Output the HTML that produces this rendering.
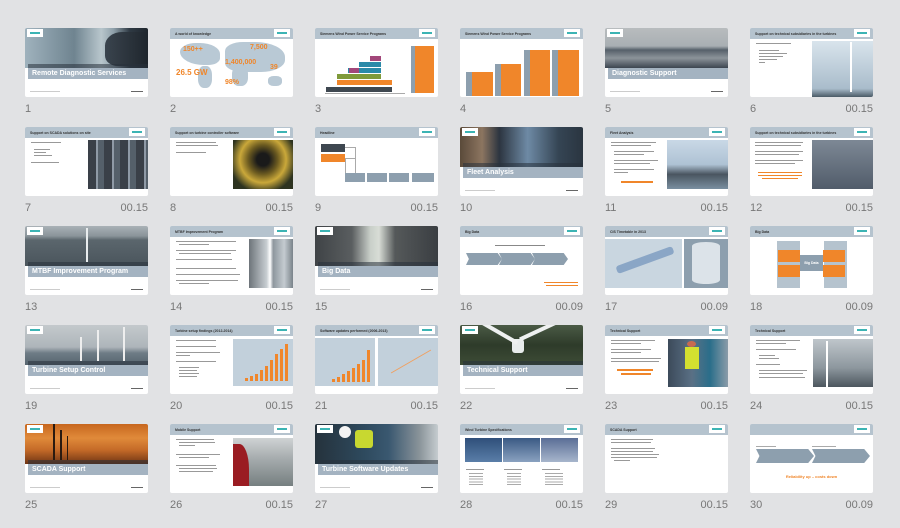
<!DOCTYPE html>
<html><head><meta charset="utf-8">
<style>
body{margin:0;width:900px;height:528px;background:#e1e2e4;font-family:"Liberation Sans",sans-serif;position:relative;overflow:hidden}
.s{position:absolute;width:123px;height:69px;background:#fff;border-radius:2px;overflow:hidden}
.s *{position:absolute;box-sizing:border-box}
.h{left:0;top:0;width:123px;height:12px;background:#b5c3ce;border-bottom:1px solid #fff}
.h b{left:5px;top:4px;font-size:3.5px;color:#333;white-space:nowrap}
.lg{right:3px;top:1px;width:16px;height:8px;background:#fff}
.lg:after{content:"";position:absolute;left:3px;top:3px;width:10px;height:1.5px;background:#3cb4b4}
.tl{left:2px;top:1px}
.ph{left:0;top:0;width:123px;height:40px}
.st{left:3px;top:36px;width:120px;height:4px;background:rgba(40,50,60,.55)}
.bd{left:3px;top:40px;width:120px;height:11px;background:#a4b3c1;color:#fff;font-weight:bold;font-size:7px;line-height:11px;padding-left:4px;white-space:nowrap}
.f1{left:5px;top:63px;width:30px;height:1px;background:#ccc}
.f2{right:5px;top:63px;width:12px;height:1px;background:#666}
.ln{height:1.2px;background:#999}
.o{background:#f0862a}
.g{background:#8d9fae}
.lab{position:absolute;font-size:11px;color:#777;width:123px}
.lab span{float:right}
</style></head><body>

<!-- Row 1 -->
<div class="s" style="left:25px;top:28px">
<div class="ph" style="background:linear-gradient(90deg,#9fb2bd 0%,#6f8490 40%,#b8c6cc 62%,#8fa0aa 72%,#2f3a44 85%,#1f262d 100%)"></div>
<div style="left:80px;top:4px;width:43px;height:34px;border-radius:40% 0 0 30%;background:linear-gradient(90deg,#3a444e,#1f262d)"></div>
<div class="st"></div><div class="bd">Remote Diagnostic Services</div>
<div class="lg tl"></div><div class="f1"></div><div class="f2"></div></div>

<div class="s" style="left:170px;top:28px">
<div class="h"><b>A world of knowledge</b></div><div class="lg"></div>
<div style="left:10px;top:15px;width:40px;height:22px;background:#b9c9d5;border-radius:40% 50% 30% 60%"></div>
<div style="left:28px;top:38px;width:14px;height:22px;background:#b9c9d5;border-radius:40%"></div>
<div style="left:55px;top:14px;width:60px;height:30px;background:#b9c9d5;border-radius:30% 50% 40% 30%"></div>
<div style="left:62px;top:38px;width:16px;height:20px;background:#b9c9d5;border-radius:40%"></div>
<div style="left:98px;top:48px;width:14px;height:10px;background:#b9c9d5;border-radius:40%"></div>
<div style="left:13px;top:18px;font-size:7px;color:#f0862a;font-weight:bold">150++</div>
<div style="left:80px;top:16px;font-size:7px;color:#f0862a;font-weight:bold">7,500</div>
<div style="left:55px;top:31px;font-size:7px;color:#f0862a;font-weight:bold">1,400,000</div>
<div style="left:100px;top:36px;font-size:7px;color:#f0862a;font-weight:bold">39</div>
<div style="left:6px;top:40px;font-size:8px;color:#f0862a;font-weight:bold">26.5 GW</div>
<div style="left:55px;top:51px;font-size:7px;color:#f0862a;font-weight:bold">98%</div></div>

<div class="s" style="left:315px;top:28px">
<div class="h"><b>Siemens Wind Power Service Programs</b></div><div class="lg"></div>
<div style="left:10px;top:65px;width:80px;height:1px;background:#aaa"></div>
<div style="left:11px;top:59px;width:66px;height:5px;background:#3e4750"></div>
<div style="left:22px;top:52px;width:55px;height:5px" class="o"></div>
<div style="left:22px;top:46px;width:44px;height:5px;background:#7f9a3a"></div>
<div style="left:33px;top:40px;width:33px;height:5px;background:#2a8aa8"></div>
<div style="left:44px;top:34px;width:22px;height:5px;background:#2a8aa8"></div>
<div style="left:55px;top:28px;width:11px;height:5px;background:#a2477a"></div>
<div style="left:34px;top:40px;width:10px;height:5px;background:#a2477a"></div>
<div style="left:96px;top:18px;width:4px;height:47px;background:#8d9fae"></div>
<div style="left:100px;top:18px;width:19px;height:47px" class="o"></div></div>

<div class="s" style="left:460px;top:28px">
<div class="h"><b>Siemens Wind Power Service Programs</b></div><div class="lg"></div>
<div style="left:6px;top:44px;width:6px;height:24px" class="g"></div><div style="left:12px;top:44px;width:21px;height:24px" class="o"></div>
<div style="left:35px;top:36px;width:6px;height:32px" class="g"></div><div style="left:41px;top:36px;width:20px;height:32px" class="o"></div>
<div style="left:64px;top:22px;width:6px;height:46px" class="g"></div><div style="left:70px;top:22px;width:20px;height:46px" class="o"></div>
<div style="left:92px;top:22px;width:6px;height:46px" class="g"></div><div style="left:98px;top:22px;width:21px;height:46px" class="o"></div></div>

<div class="s" style="left:605px;top:28px">
<div class="ph" style="background:linear-gradient(180deg,#b8bcbe 0%,#a9afb3 45%,#56606a 55%,#8c949a 75%,#3c4550 100%)"></div>
<div class="bd" style="top:40px;left:3px">Diagnostic Support</div>
<div class="lg tl"></div><div class="f1"></div><div class="f2"></div></div>

<div class="s" style="left:750px;top:28px">
<div class="h"><b>Support on technical subsidiaries in the turbines</b></div><div class="lg"></div>
<div style="left:62px;top:13px;width:61px;height:56px;background:linear-gradient(180deg,#d9e4ec,#a9bccb 85%,#4a5a66)"></div>
<div style="left:100px;top:14px;width:2px;height:50px;background:#fff"></div>
<div style="left:6px;top:15px;width:35px" class="ln"></div>
<div style="left:9px;top:22px;width:20px" class="ln"></div><div style="left:9px;top:25px;width:28px" class="ln"></div><div style="left:9px;top:28px;width:24px" class="ln"></div><div style="left:9px;top:31px;width:18px" class="ln"></div><div style="left:9px;top:34px;width:6px" class="ln"></div></div>

<!-- Row 2 -->
<div class="s" style="left:25px;top:127px">
<div class="h"><b>Support on SCADA solutions on site</b></div><div class="lg"></div>
<div style="left:63px;top:13px;width:60px;height:49px;background:repeating-linear-gradient(90deg,#3a4048 0 8px,#8f9aa6 8px 10px,#55606a 10px 16px)"></div>
<div style="left:6px;top:15px;width:30px" class="ln"></div>
<div style="left:9px;top:22px;width:16px" class="ln"></div><div style="left:9px;top:25px;width:12px" class="ln"></div><div style="left:9px;top:28px;width:18px" class="ln"></div><div style="left:6px;top:35px;width:28px" class="ln"></div></div>

<div class="s" style="left:170px;top:127px">
<div class="h"><b>Support on turbine controller software</b></div><div class="lg"></div>
<div style="left:63px;top:13px;width:60px;height:49px;background:radial-gradient(circle at 50% 40%,#1a1a1a 15%,#6b5a20 35%,#caa83a 55%,#2d3320 80%)"></div>
<div style="left:6px;top:15px;width:40px" class="ln"></div><div style="left:6px;top:18px;width:42px" class="ln"></div><div style="left:6px;top:25px;width:30px" class="ln"></div></div>

<div class="s" style="left:315px;top:127px">
<div class="h"><b>Headline</b></div><div class="lg"></div>
<div style="left:6px;top:17px;width:24px;height:8px;background:#3e4750"></div>
<div style="left:6px;top:27px;width:24px;height:8px" class="o"></div>
<div style="left:30px;top:20px;width:10px;height:1px;background:#aaa"></div><div style="left:40px;top:20px;width:1px;height:26px;background:#aaa"></div>
<div style="left:30px;top:31px;width:10px;height:1px;background:#aaa"></div><div style="left:30px;top:31px;width:1px;height:15px;background:#aaa"></div>
<div style="left:30px;top:46px;width:20px;height:9px" class="g"></div><div style="left:52px;top:46px;width:20px;height:9px" class="g"></div><div style="left:74px;top:46px;width:20px;height:9px" class="g"></div><div style="left:97px;top:46px;width:22px;height:9px" class="g"></div></div>

<div class="s" style="left:460px;top:127px">
<div class="ph" style="background:linear-gradient(90deg,#5a4a3a 0%,#8c7560 18%,#2c3540 32%,#6e8aa5 55%,#354554 80%,#2a3540 100%)"></div>
<div class="st"></div><div class="bd">Fleet Analysis</div>
<div class="lg tl"></div><div class="f1"></div><div class="f2"></div></div>

<div class="s" style="left:605px;top:127px">
<div class="h"><b>Fleet Analysis</b></div><div class="lg"></div>
<div style="left:62px;top:13px;width:61px;height:49px;background:linear-gradient(180deg,#c9d8e6 0%,#aec2d4 50%,#4a5560 70%,#7a8fa0 100%)"></div>
<div style="left:6px;top:15px;width:45px" class="ln"></div><div style="left:6px;top:18px;width:40px" class="ln"></div>
<div style="left:9px;top:24px;width:40px" class="ln"></div><div style="left:9px;top:27px;width:30px" class="ln"></div>
<div style="left:9px;top:33px;width:44px" class="ln"></div><div style="left:9px;top:36px;width:36px" class="ln"></div>
<div style="left:9px;top:42px;width:40px" class="ln"></div><div style="left:9px;top:45px;width:14px" class="ln"></div>
<div style="left:16px;top:54px;width:32px;height:1.5px" class="o"></div></div>

<div class="s" style="left:750px;top:127px">
<div class="h"><b>Support on technical subsidiaries in the turbines</b></div><div class="lg"></div>
<div style="left:62px;top:13px;width:61px;height:49px;background:linear-gradient(180deg,#7d8895,#515c6a)"></div>
<div style="left:5px;top:15px;width:48px" class="ln"></div><div style="left:5px;top:18px;width:46px" class="ln"></div>
<div style="left:5px;top:24px;width:48px" class="ln"></div><div style="left:5px;top:27px;width:44px" class="ln"></div>
<div style="left:5px;top:33px;width:48px" class="ln"></div><div style="left:5px;top:36px;width:40px" class="ln"></div>
<div style="left:8px;top:45px;width:44px;height:1.2px" class="o"></div><div style="left:8px;top:48px;width:44px;height:1.2px" class="o"></div><div style="left:12px;top:51px;width:36px;height:1.2px" class="o"></div></div>

<!-- Row 3 -->
<div class="s" style="left:25px;top:226px">
<div class="ph" style="background:linear-gradient(180deg,#a9b1b6 0%,#8a949a 25%,#5b666d 35%,#4a555c 100%)"></div>
<div style="left:61px;top:2px;width:1.5px;height:34px;background:#e8ecee"></div>
<div class="st"></div><div class="bd">MTBF Improvement Program</div>
<div class="lg tl"></div><div class="f1"></div><div class="f2"></div></div>

<div class="s" style="left:170px;top:226px">
<div class="h"><b>MTBF Improvement Program</b></div><div class="lg"></div>
<div style="left:79px;top:13px;width:44px;height:49px;background:linear-gradient(90deg,#6d747a,#c7cdd1 40%,#fff 48%,#8e979e 55%,#c4cbd0 80%,#7a838a)"></div>
<div style="left:6px;top:15px;width:60px" class="ln"></div><div style="left:9px;top:18px;width:30px" class="ln"></div>
<div style="left:6px;top:24px;width:60px" class="ln"></div><div style="left:9px;top:27px;width:52px" class="ln"></div>
<div style="left:6px;top:33px;width:56px" class="ln"></div><div style="left:6px;top:42px;width:60px" class="ln"></div>
<div style="left:6px;top:48px;width:64px" class="ln"></div><div style="left:6px;top:54px;width:62px" class="ln"></div><div style="left:9px;top:57px;width:30px" class="ln"></div></div>

<div class="s" style="left:315px;top:226px">
<div class="ph" style="background:linear-gradient(90deg,#3f4346 0%,#5a5e60 30%,#c9cfc9 45%,#d8ddd6 52%,#55595a 65%,#3a3e42 100%)"></div>
<div class="st"></div><div class="bd">Big Data</div>
<div class="lg tl"></div><div class="f1"></div><div class="f2"></div></div>

<div class="s" style="left:460px;top:226px">
<div class="h"><b>Big Data</b></div><div class="lg"></div>
<div style="left:35px;top:19px;width:50px;height:1px;background:#888"></div>
<div style="left:6px;top:27px;width:36px;height:12px;background:#8d9fae;clip-path:polygon(0 0,88% 0,100% 50%,88% 100%,0 100%,8% 50%)"></div>
<div style="left:39px;top:27px;width:36px;height:12px;background:#8d9fae;clip-path:polygon(0 0,88% 0,100% 50%,88% 100%,0 100%,8% 50%)"></div>
<div style="left:72px;top:27px;width:36px;height:12px;background:#8d9fae;clip-path:polygon(0 0,88% 0,100% 50%,88% 100%,0 100%,8% 50%)"></div>
<div style="left:84px;top:56px;width:34px;height:1.2px" class="o"></div><div style="left:86px;top:59px;width:32px;height:1.2px" class="o"></div></div>

<div class="s" style="left:605px;top:226px">
<div class="h"><b>CIS Timetable in 2013</b></div><div class="lg"></div>
<div style="left:0px;top:13px;width:77px;height:49px;background:#c9d6e0"></div>
<div style="left:10px;top:30px;width:60px;height:8px;background:#8aa6c6;transform:rotate(-20deg);border-radius:3px"></div>
<div style="left:79px;top:13px;width:44px;height:49px;background:#8d9fae"></div>
<div style="left:87px;top:16px;width:28px;height:42px;background:#dce3e9;border-radius:14px/4px"></div></div>

<div class="s" style="left:750px;top:226px">
<div class="h"><b>Big Data</b></div><div class="lg"></div>
<div style="left:27px;top:15px;width:23px;height:47px;background:#b5c3ce"></div>
<div style="left:74px;top:15px;width:23px;height:47px;background:#b5c3ce"></div>
<div style="left:28px;top:24px;width:22px;height:12px" class="o"></div><div style="left:73px;top:24px;width:22px;height:12px" class="o"></div>
<div style="left:28px;top:39px;width:22px;height:12px" class="o"></div><div style="left:73px;top:39px;width:22px;height:12px" class="o"></div>
<div style="left:50px;top:29px;width:23px;height:16px;background:#8d9fae;color:#fff;font-size:3.5px;font-weight:bold;text-align:center;line-height:16px">Big Data</div></div>

<!-- Row 4 -->
<div class="s" style="left:25px;top:325px">
<div class="ph" style="background:linear-gradient(180deg,#c4c9cc 0%,#aeb5ba 55%,#6e7c86 70%,#56646e 100%)"></div>
<div style="left:55px;top:12px;width:1.5px;height:24px;background:#eee"></div><div style="left:72px;top:5px;width:1.5px;height:31px;background:#eee"></div><div style="left:98px;top:2px;width:2px;height:34px;background:#eee"></div>
<div class="st"></div><div class="bd">Turbine Setup Control</div>
<div class="lg tl"></div><div class="f1"></div><div class="f2"></div></div>

<div class="s" style="left:170px;top:325px">
<div class="h"><b>Turbine setup findings (2012-2014)</b></div><div class="lg"></div>
<div style="left:63px;top:14px;width:60px;height:47px;background:#c2d0db"></div>
<div style="left:75px;top:53px;width:3px;height:3px" class="o"></div><div style="left:80px;top:51px;width:3px;height:5px" class="o"></div><div style="left:85px;top:49px;width:3px;height:7px" class="o"></div><div style="left:90px;top:45px;width:3px;height:11px" class="o"></div><div style="left:95px;top:41px;width:3px;height:15px" class="o"></div><div style="left:100px;top:35px;width:3px;height:21px" class="o"></div><div style="left:105px;top:29px;width:3px;height:27px" class="o"></div><div style="left:110px;top:24px;width:3px;height:32px" class="o"></div><div style="left:115px;top:19px;width:3px;height:37px" class="o"></div>
<div style="left:6px;top:15px;width:40px" class="ln"></div><div style="left:6px;top:21px;width:40px" class="ln"></div><div style="left:6px;top:27px;width:44px" class="ln"></div><div style="left:6px;top:30px;width:14px" class="ln"></div><div style="left:6px;top:36px;width:40px" class="ln"></div><div style="left:9px;top:42px;width:20px" class="ln"></div><div style="left:9px;top:45px;width:18px" class="ln"></div><div style="left:9px;top:48px;width:20px" class="ln"></div><div style="left:9px;top:51px;width:18px" class="ln"></div></div>

<div class="s" style="left:315px;top:325px">
<div class="h"><b>Software updates performed (2006-2013)</b></div><div class="lg"></div>
<div style="left:0;top:13px;width:60px;height:48px;background:#c2d0db"></div>
<div style="left:63px;top:13px;width:60px;height:48px;background:#c2d0db"></div>
<div style="left:17px;top:54px;width:3px;height:3px" class="o"></div><div style="left:22px;top:52px;width:3px;height:5px" class="o"></div><div style="left:27px;top:49px;width:3px;height:8px" class="o"></div><div style="left:32px;top:46px;width:3px;height:11px" class="o"></div><div style="left:37px;top:43px;width:3px;height:14px" class="o"></div><div style="left:42px;top:39px;width:3px;height:18px" class="o"></div><div style="left:47px;top:35px;width:3px;height:22px" class="o"></div><div style="left:52px;top:25px;width:3px;height:32px" class="o"></div>
<div style="left:73px;top:36px;width:46px;height:1px;background:#f0a060;transform:rotate(-30deg)"></div></div>

<div class="s" style="left:460px;top:325px">
<div class="ph" style="background:linear-gradient(180deg,#4a5a45 0%,#2e3b2a 50%,#3d4c36 100%)"></div>
<div style="left:52px;top:14px;width:12px;height:14px;background:#e8ecec;border-radius:3px"></div>
<div style="left:20px;top:6px;width:40px;height:4px;background:#eef0f0;transform:rotate(30deg)"></div><div style="left:58px;top:4px;width:40px;height:4px;background:#eef0f0;transform:rotate(-25deg)"></div>
<div class="st"></div><div class="bd">Technical Support</div>
<div class="lg tl"></div><div class="f1"></div><div class="f2"></div></div>

<div class="s" style="left:605px;top:325px">
<div class="h"><b>Technical Support</b></div><div class="lg"></div>
<div style="left:63px;top:14px;width:60px;height:48px;background:linear-gradient(90deg,#3c4a5a,#5a7085 40%,#2a6e8a 70%,#8a9ba8)"></div>
<div style="left:80px;top:22px;width:14px;height:22px;background:#d4e030"></div><div style="left:82px;top:16px;width:9px;height:6px;background:#c86a50;border-radius:50%"></div>
<div style="left:6px;top:15px;width:44px" class="ln"></div><div style="left:6px;top:18px;width:30px" class="ln"></div><div style="left:6px;top:24px;width:40px" class="ln"></div><div style="left:6px;top:27px;width:30px" class="ln"></div><div style="left:6px;top:33px;width:50px" class="ln"></div><div style="left:6px;top:36px;width:48px" class="ln"></div>
<div style="left:12px;top:44px;width:36px;height:1.5px" class="o"></div><div style="left:16px;top:48px;width:30px;height:1.5px" class="o"></div></div>

<div class="s" style="left:750px;top:325px">
<div class="h"><b>Technical Support</b></div><div class="lg"></div>
<div style="left:63px;top:14px;width:60px;height:48px;background:linear-gradient(180deg,#bfc6cb,#8d979e 60%,#4c565e)"></div>
<div style="left:76px;top:16px;width:2px;height:46px;background:#fff"></div>
<div style="left:6px;top:15px;width:44px" class="ln"></div><div style="left:6px;top:18px;width:30px" class="ln"></div><div style="left:6px;top:24px;width:40px" class="ln"></div><div style="left:9px;top:30px;width:16px" class="ln"></div><div style="left:9px;top:33px;width:20px" class="ln"></div><div style="left:6px;top:39px;width:24px" class="ln"></div><div style="left:9px;top:45px;width:48px" class="ln"></div><div style="left:9px;top:48px;width:44px" class="ln"></div><div style="left:9px;top:52px;width:46px" class="ln"></div></div>

<!-- Row 5 -->
<div class="s" style="left:25px;top:424px">
<div class="ph" style="background:linear-gradient(180deg,#c7671e 0%,#e08a3a 35%,#c46a28 65%,#6e3414 100%)"></div>
<div style="left:28px;top:0;width:2px;height:36px;background:#2a1a10"></div><div style="left:35px;top:6px;width:1.5px;height:30px;background:#2a1a10"></div><div style="left:42px;top:12px;width:1px;height:24px;background:#2a1a10"></div>
<div class="st"></div><div class="bd">SCADA Support</div>
<div class="lg tl"></div><div class="f1"></div><div class="f2"></div></div>

<div class="s" style="left:170px;top:424px">
<div class="h"><b>Mobile Support</b></div><div class="lg"></div>
<div style="left:63px;top:14px;width:60px;height:48px;background:linear-gradient(180deg,#cfd3d4,#a8aeb0 40%,#767f80)"></div>
<div style="left:63px;top:20px;width:16px;height:42px;background:#9a1c22;border-radius:0 60% 0 0"></div>
<div style="left:6px;top:15px;width:38px" class="ln"></div><div style="left:9px;top:18px;width:36px" class="ln"></div><div style="left:9px;top:21px;width:16px" class="ln"></div><div style="left:6px;top:30px;width:44px" class="ln"></div><div style="left:9px;top:33px;width:30px" class="ln"></div><div style="left:6px;top:41px;width:40px" class="ln"></div><div style="left:9px;top:44px;width:38px" class="ln"></div><div style="left:9px;top:47px;width:34px" class="ln"></div></div>

<div class="s" style="left:315px;top:424px">
<div class="ph" style="background:linear-gradient(90deg,#25323c 0%,#2e4a5e 40%,#3a5870 60%,#8a949a 85%,#c5cccf 100%)"></div>
<div style="left:40px;top:6px;width:18px;height:18px;background:#c8d830;border-radius:3px"></div><div style="left:24px;top:2px;width:12px;height:12px;background:#f4f4f4;border-radius:50%"></div>
<div class="st"></div><div class="bd">Turbine Software Updates</div>
<div class="lg tl"></div><div class="f1"></div><div class="f2"></div></div>

<div class="s" style="left:460px;top:424px">
<div class="h"><b>Wind Turbine Specifications</b></div><div class="lg"></div>
<div style="left:5px;top:14px;width:37px;height:24px;background:linear-gradient(180deg,#2f4f7a,#5a7ea8)"></div>
<div style="left:43px;top:14px;width:37px;height:24px;background:linear-gradient(180deg,#3a5a84,#8aa2c0)"></div>
<div style="left:81px;top:14px;width:37px;height:24px;background:linear-gradient(180deg,#5a6e96,#a7b6cc)"></div>
<div style="left:6px;top:45px;width:18px" class="ln"></div><div style="left:44px;top:45px;width:18px" class="ln"></div><div style="left:82px;top:45px;width:18px" class="ln"></div>
<div style="left:9px;top:49px;width:14px;height:14px;background:repeating-linear-gradient(180deg,#aaa 0 1px,transparent 1px 2.8px)"></div>
<div style="left:47px;top:49px;width:14px;height:14px;background:repeating-linear-gradient(180deg,#aaa 0 1px,transparent 1px 2.8px)"></div>
<div style="left:85px;top:49px;width:18px;height:14px;background:repeating-linear-gradient(180deg,#aaa 0 1px,transparent 1px 2.8px)"></div></div>

<div class="s" style="left:605px;top:424px">
<div class="h"><b>SCADA Support</b></div><div class="lg"></div>
<div style="left:6px;top:15px;width:42px" class="ln"></div><div style="left:6px;top:18px;width:40px" class="ln"></div>
<div style="left:6px;top:24px;width:44px" class="ln"></div><div style="left:6px;top:27px;width:42px" class="ln"></div><div style="left:6px;top:30px;width:48px" class="ln"></div><div style="left:6px;top:33px;width:46px" class="ln"></div><div style="left:9px;top:36px;width:16px" class="ln"></div></div>

<div class="s" style="left:750px;top:424px">
<div class="h"></div><div class="lg"></div>
<div style="left:6px;top:22px;width:20px;height:1px;background:#aaa"></div><div style="left:62px;top:22px;width:24px;height:1px;background:#aaa"></div>
<div style="left:6px;top:25px;width:58px;height:14px;background:#8d9fae;clip-path:polygon(0 0,90% 0,100% 50%,90% 100%,0 100%,6% 50%)"></div>
<div style="left:62px;top:25px;width:58px;height:14px;background:#8d9fae;clip-path:polygon(0 0,90% 0,100% 50%,90% 100%,0 100%,6% 50%)"></div>
<div style="left:0;top:50px;width:123px;text-align:center;font-size:4px;color:#f0862a;font-weight:bold">Reliability up – costs down</div></div>

<!-- Labels -->
<div class="lab" style="left:25px;top:103px">1</div>
<div class="lab" style="left:170px;top:103px">2</div>
<div class="lab" style="left:315px;top:103px">3</div>
<div class="lab" style="left:460px;top:103px">4</div>
<div class="lab" style="left:605px;top:103px">5</div>
<div class="lab" style="left:750px;top:103px">6<span>00.15</span></div>

<div class="lab" style="left:25px;top:202px">7<span>00.15</span></div>
<div class="lab" style="left:170px;top:202px">8<span>00.15</span></div>
<div class="lab" style="left:315px;top:202px">9<span>00.15</span></div>
<div class="lab" style="left:460px;top:202px">10</div>
<div class="lab" style="left:605px;top:202px">11<span>00.15</span></div>
<div class="lab" style="left:750px;top:202px">12<span>00.15</span></div>

<div class="lab" style="left:25px;top:301px">13</div>
<div class="lab" style="left:170px;top:301px">14<span>00.15</span></div>
<div class="lab" style="left:315px;top:301px">15</div>
<div class="lab" style="left:460px;top:301px">16<span>00.09</span></div>
<div class="lab" style="left:605px;top:301px">17<span>00.09</span></div>
<div class="lab" style="left:750px;top:301px">18<span>00.09</span></div>

<div class="lab" style="left:25px;top:400px">19</div>
<div class="lab" style="left:170px;top:400px">20<span>00.15</span></div>
<div class="lab" style="left:315px;top:400px">21<span>00.15</span></div>
<div class="lab" style="left:460px;top:400px">22</div>
<div class="lab" style="left:605px;top:400px">23<span>00.15</span></div>
<div class="lab" style="left:750px;top:400px">24<span>00.15</span></div>

<div class="lab" style="left:25px;top:499px">25</div>
<div class="lab" style="left:170px;top:499px">26<span>00.15</span></div>
<div class="lab" style="left:315px;top:499px">27</div>
<div class="lab" style="left:460px;top:499px">28<span>00.15</span></div>
<div class="lab" style="left:605px;top:499px">29<span>00.15</span></div>
<div class="lab" style="left:750px;top:499px">30<span>00.09</span></div>
</body></html>
